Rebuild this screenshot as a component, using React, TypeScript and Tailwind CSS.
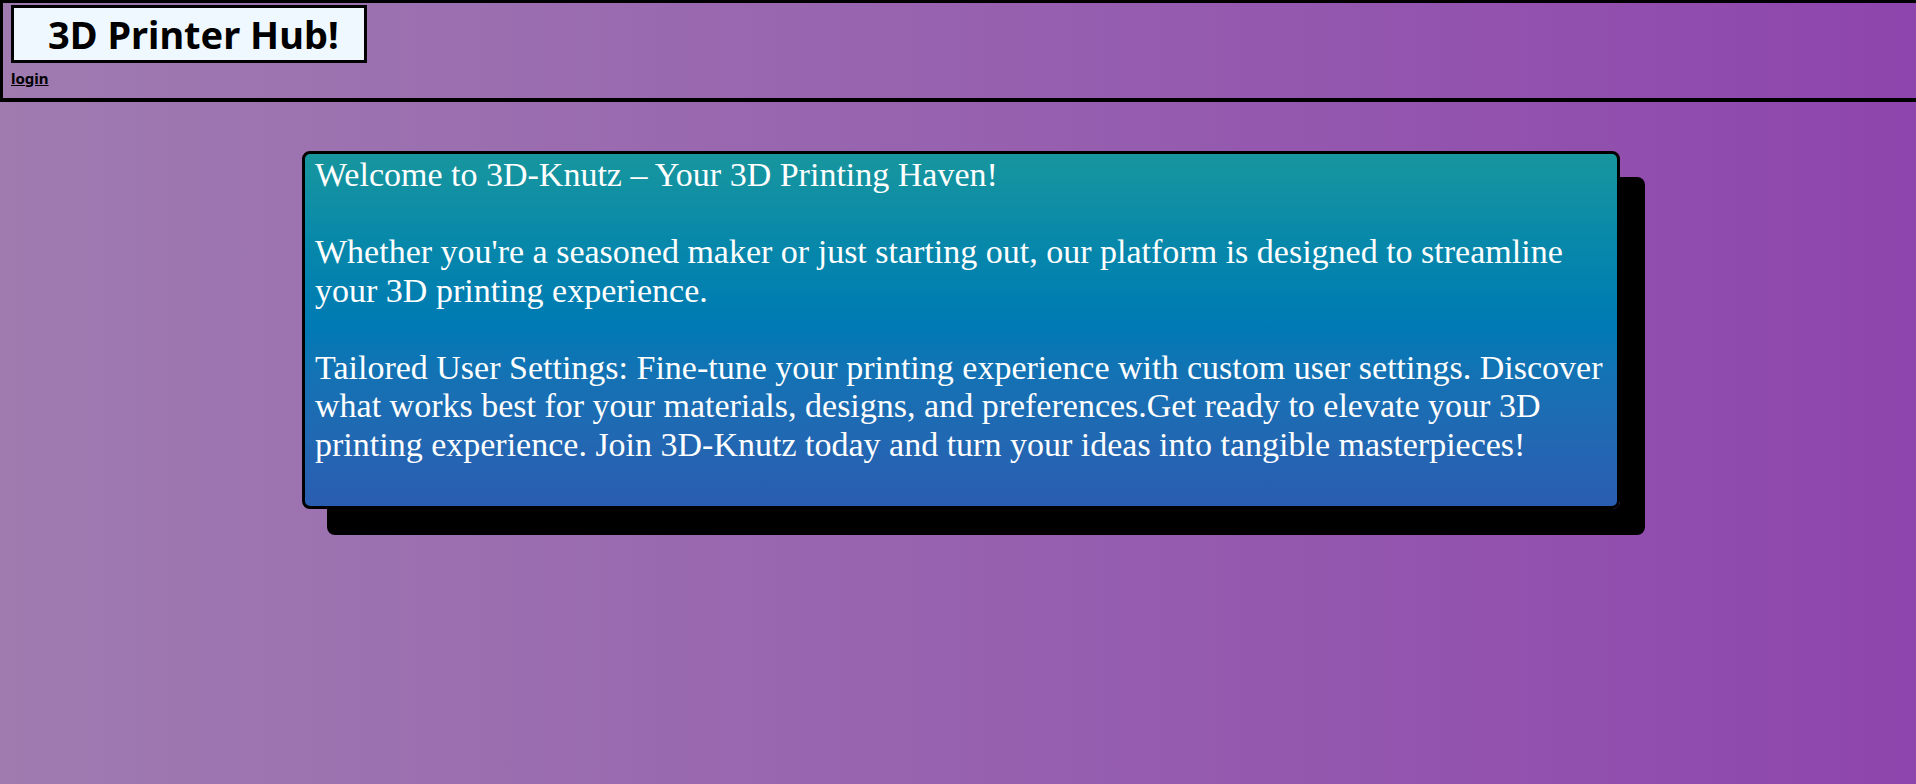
export default function App() {
  return (
    <div className="min-h-screen w-full overflow-hidden bg-gradient-to-r from-[#9f7bb0] to-[#8e45ad] pb-10">
      <header className="w-[calc(100%+6px)] border-[3px] border-b-[4px] border-black px-[8px] pt-[2px] pb-[10px]">
        <h1 className="h-[58px] w-[356px] border-[3px] border-black bg-[#f0f8ff] pl-[34px] font-['Noto_Sans',sans-serif] text-[38px] leading-[52px] font-bold text-black">
          3D Printer Hub!
        </h1>
        <a
          href="#"
          className="mt-[6px] block font-['Noto_Sans',sans-serif] text-[15px] leading-[19px] font-bold text-black underline"
        >
          login
        </a>
      </header>

      <section className="mt-[49px] ml-[302px] w-[1318px] rounded-[8px] border-[3px] border-black bg-gradient-to-b from-[#17969e] via-[#0079b4] to-[#2a5db1] px-[10px] pt-[2px] pb-[42px] font-['Liberation_Serif',serif] text-[34px] leading-[38.5px] text-white shadow-[25px_26px_0_0_#000]">
        <p>
          Welcome to 3D-Knutz – Your 3D Printing Haven!
          <br />
          <br />
          Whether you're a seasoned maker or just starting out, our platform is
          designed to streamline
          <br />
          your 3D printing experience.
          <br />
          <br />
          Tailored User Settings: Fine-tune your printing experience with
          custom user settings. Discover
          <br />
          what works best for your materials, designs, and preferences.Get
          ready to elevate your 3D
          <br />
          printing experience. Join 3D-Knutz today and turn your ideas into
          tangible masterpieces!
        </p>
      </section>
    </div>
  );
}
